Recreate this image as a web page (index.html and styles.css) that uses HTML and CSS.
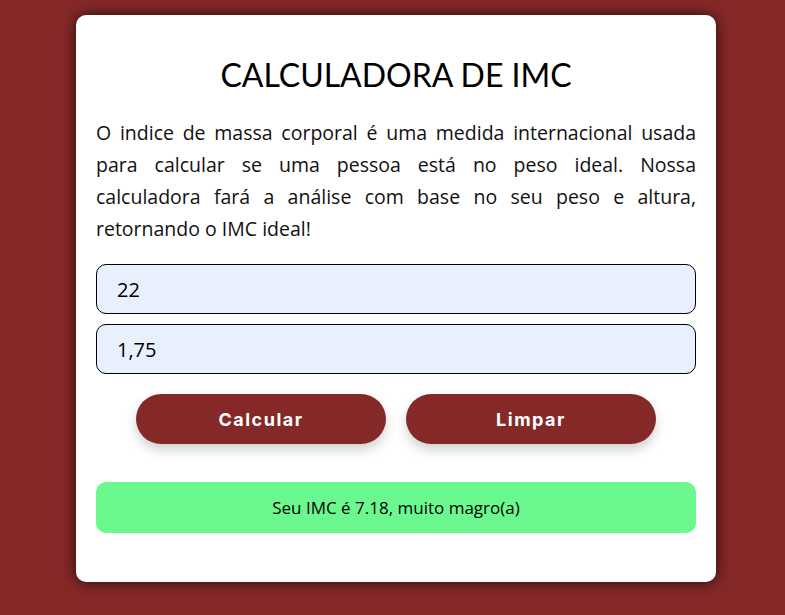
FILE: index.html
```html
<!DOCTYPE html>
<html lang="pt-BR">
<head>
<meta charset="utf-8">
<title>Calculadora de IMC</title>
<link rel="stylesheet" href="styles.css">
</head>
<body>
<main class="card">
  <h1 class="title">CALCULADORA DE IMC</h1>
  <p class="intro">O indice de massa corporal é uma medida internacional usada para calcular se uma pessoa está no peso ideal. Nossa calculadora fará a análise com base no seu peso e altura, retornando o IMC ideal!</p>
  <div class="fields">
    <input class="field" type="text" value="22">
    <input class="field" type="text" value="1,75">
  </div>
  <div class="actions">
    <button class="btn" type="button">Calcular</button>
    <button class="btn" type="button">Limpar</button>
  </div>
  <div class="result">Seu IMC é 7.18, muito magro(a)</div>
</main>
</body>
</html>
```
FILE: styles.css
```css
* { box-sizing: border-box; }
html, body { height: 100%; }
body {
  margin: 0;
  background: #852828;
  font-family: "Open Sans", sans-serif;
  display: flex;
  justify-content: center;
  align-items: flex-start;
  padding: 15px 0 0 7px;
}
.card {
  width: 640px;
  background: #fff;
  border-radius: 10px;
  box-shadow: 0 0 14px rgba(0, 0, 0, 0.75);
  padding: 38px 20px 49px;
}
.title {
  margin: 0 0 20px;
  text-align: center;
  font-family: "Lato", sans-serif;
  font-weight: 400;
  font-size: 32px;
  line-height: 44px;
  color: #000;
}
.intro {
  margin: 0 0 19px;
  font-size: 19.5px;
  line-height: 32px;
  text-align: justify;
  color: #111;
}
.fields {
  display: flex;
  flex-direction: column;
  gap: 10px;
}
.field {
  height: 50px;
  width: 100%;
  border: 1px solid #000;
  border-radius: 10px;
  background: #e8f0fe;
  padding: 0 20px;
  font-family: "Open Sans", sans-serif;
  font-size: 20px;
  color: #000;
  outline: none;
}
.actions {
  display: flex;
  justify-content: center;
  gap: 20px;
  margin-top: 20px;
}
.btn {
  width: 250px;
  height: 50px;
  border: none;
  border-radius: 25px;
  background: #852828;
  color: #fff;
  font-family: "Inter", sans-serif;
  font-weight: 700;
  font-size: 18px;
  letter-spacing: 1.5px;
  box-shadow: 0 6px 12px rgba(0, 0, 0, 0.18);
}
.result {
  margin-top: 38px;
  height: 51px;
  display: flex;
  align-items: center;
  justify-content: center;
  background: #6bf98f;
  border-radius: 10px;
  font-size: 17px;
  color: #000;
}
```
